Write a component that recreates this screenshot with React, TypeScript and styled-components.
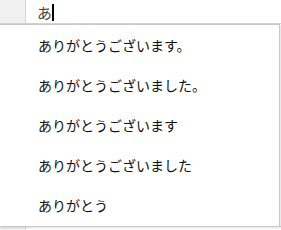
import styled, { createGlobalStyle } from 'styled-components';

const GlobalStyle = createGlobalStyle`
  html, body {
    margin: 0;
    padding: 0;
    background: #ffffff;
  }
  body {
    font-family: "Noto Sans CJK JP", "Noto Sans", sans-serif;
    color: #222222;
    overflow: hidden;
  }
`;

const candidates = [
  'ありがとうございます。',
  'ありがとうございました。',
  'ありがとうございます',
  'ありがとうございました',
  'ありがとう',
];

const Sheet = styled.div`
  position: relative;
  width: 281px;
  height: 230px;
  overflow: hidden;
`;

const Row = styled.div<{ $height: number }>`
  display: flex;
  height: ${({ $height }) => $height}px;
  border-bottom: 1px solid #d4d4d4;
`;

const Gutter = styled.div`
  width: 25px;
  flex: none;
  background: #f0f0f0;
  border-right: 1px solid #d4d4d4;
`;

const Cell = styled.div`
  flex: 1;
  display: flex;
  align-items: center;
  padding-left: 11px;
  padding-top: 1px;
  font-size: 15px;
  color: #444444;
`;

const Caret = styled.span`
  display: inline-block;
  width: 2px;
  height: 17px;
  background: #000000;
`;

const Popup = styled.ul`
  position: absolute;
  top: 24px;
  left: -1px;
  width: 281px;
  height: 203px;
  margin: 0;
  padding: 0;
  list-style: none;
  background: #ffffff;
  border: 1px solid #c8c8c8;
  box-shadow: 1px 1px 2px rgba(0, 0, 0, 0.12);
  box-sizing: border-box;
`;

const Item = styled.li`
  height: 40px;
  display: flex;
  align-items: center;
  padding-left: 38px;
  font-size: 14px;
  color: #111111;
  white-space: nowrap;
`;

export default function App() {
  return (
    <Sheet>
      <GlobalStyle />
      <Row $height={23}>
        <Gutter />
        <Cell>
          あ<Caret />
        </Cell>
      </Row>
      <Row $height={202}>
        <Gutter />
        <Cell />
      </Row>
      <Row $height={24}>
        <Gutter />
        <Cell />
      </Row>
      <Popup>
        {candidates.map((c) => (
          <Item key={c}>{c}</Item>
        ))}
      </Popup>
    </Sheet>
  );
}
